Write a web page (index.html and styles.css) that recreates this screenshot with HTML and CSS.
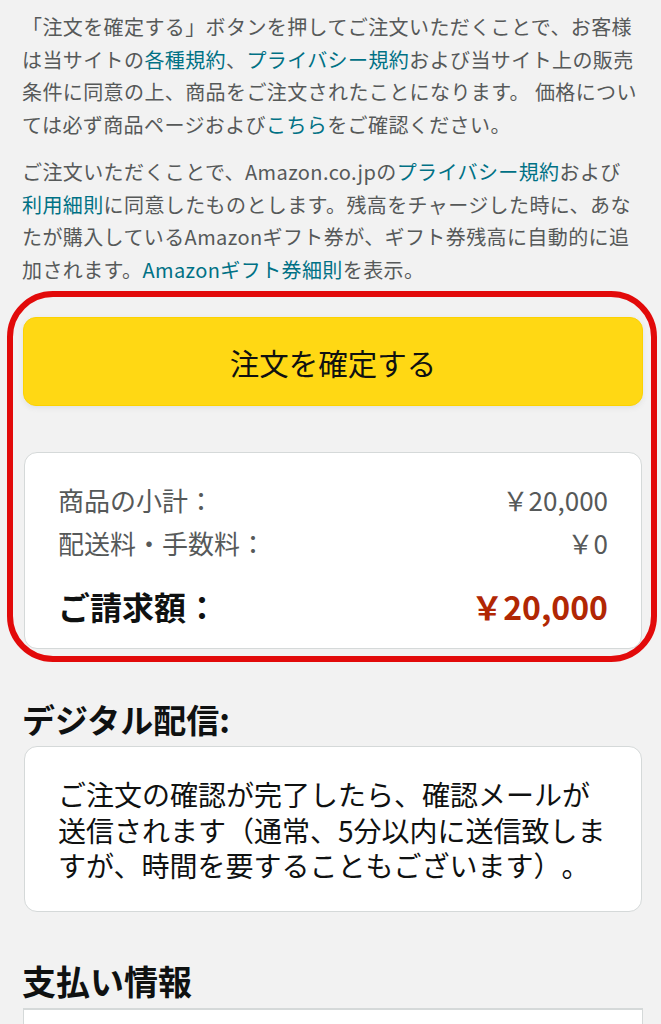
FILE: index.html
```html
<!DOCTYPE html>
<html lang="ja">
	<head>
		<meta charset="utf-8">
		<meta name="viewport" content="width=device-width, initial-scale=1">
		<title>注文の確認</title>
		<link rel="stylesheet" href="styles.css">
	</head>
	<body>
		<div class="page">
			<p class="legal">「注文を確定する」ボタンを押してご注文いただくことで、お客様は当サイトの<a href="#">各種規約</a>、<a href="#">プライバシー規約</a>および当サイト上の販売条件に同意の上、商品をご注文されたことになります。 価格については必ず商品ページおよび<a href="#">こちら</a>をご確認ください。</p>
			<p class="legal">ご注文いただくことで、Amazon.co.jpの<a href="#">プライバシー規約</a>および<a href="#">利用細則</a>に同意したものとします。残高をチャージした時に、あなたが購入しているAmazonギフト券が、ギフト券残高に自動的に追加されます。<a href="#">Amazonギフト券細則</a>を表示。</p>

			<div class="highlight">
				<button class="place-order">注文を確定する</button>

				<div class="box summary">
					<div class="row">
						<span>商品の小計：</span>
						<span>￥20,000</span>
					</div>
					<div class="row">
						<span>配送料・手数料：</span>
						<span>￥0</span>
					</div>
					<div class="row total">
						<span>ご請求額：</span>
						<span class="price">￥20,000</span>
					</div>
				</div>
			</div>

			<h2>デジタル配信:</h2>
			<div class="box delivery">
				ご注文の確認が完了したら、確認メールが送信されます（通常、5分以内に送信致しますが、時間を要することもございます）。
			</div>

			<h2 class="pay-title">支払い情報</h2>
			<div class="box payment"></div>
		</div>
	</body>
</html>
```
FILE: styles.css
```css
body{
	margin: 0;
	background: #f2f2f2;
	font-family: "Noto Sans CJK JP", "Noto Sans", sans-serif;
	color: #0f1111;
	text-spacing-trim: space-all;
}
.page{
	padding: 11px 18px 0 23px;
}
a{
	color: #007185;
	text-decoration: none;
}

.legal{
	margin: 0 0 15px -1px;
	padding-right: 4px;
	font-size: 20px;
	letter-spacing: 0.4px;
	line-height: 32.5px;
	color: #565959;
}

.highlight{
	position: relative;
	margin-top: 31px;
}
/* red marker drawn round the order button and total */
.highlight::after{
	content: "";
	position: absolute;
	top: -26px;
	bottom: -13px;
	left: -16px;
	right: -14px;
	border: 6px solid #e20a0a;
	border-radius: 46px;
	pointer-events: none;
}

.place-order{
	display: block;
	width: 100%;
	height: 89px;
	background: #ffd814;
	border: 1px solid #fcd200;
	border-radius: 13px;
	box-shadow: 0 2px 5px rgba(213, 217, 217, 0.6);
	font-family: inherit;
	font-size: 29.5px;
	color: #0f1111;
}

.box{
	background: #fff;
	border: 1px solid #d5d9d9;
	border-radius: 13px;
}

.summary{
	margin: 46px 1px 0 1px;
	padding: 25px 33px 20px 33px;
}
.row{
	display: flex;
	justify-content: space-between;
	font-size: 26px;
	line-height: 43px;
	color: #565959;
}
.row.total{
	margin-top: 21px;
	font-size: 32px;
	font-weight: bold;
	color: #0f1111;
}
.price{
	color: #b12704;
}

h2{
	margin: 50px 0 7px -1px;
	font-size: 33px;
	line-height: 40px;
	font-weight: bold;
}

.delivery{
	margin: 0 1px;
	padding: 30px 33px 27px 33px;
	font-size: 28px;
	line-height: 35.5px;
}

.pay-title{
	margin-top: 49px;
	font-size: 34px;
}
.payment{
	height: 60px;
	border-radius: 0;
	border-top: 2px solid #d5d9d9;
}
```
